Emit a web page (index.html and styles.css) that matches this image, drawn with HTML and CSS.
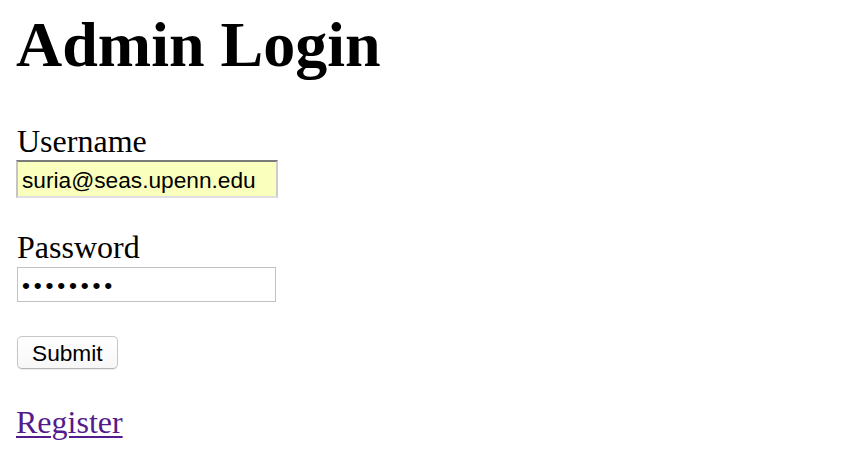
FILE: index.html
```html
<!DOCTYPE html>
<html lang="en">
<head>
<meta charset="utf-8">
<title>Admin Login</title>
<link rel="stylesheet" href="styles.css">
</head>
<body>
  <h1 class="title">Admin Login</h1>
  <form class="login-form">
    <div class="field field-user">
      <label class="field-label" for="username">Username</label>
      <input class="field-input input-autofill" id="username" type="text" value="suria@seas.upenn.edu">
    </div>
    <div class="field field-pass">
      <label class="field-label" for="password">Password</label>
      <input class="field-input input-plain" id="password" type="password" value="password">
    </div>
    <div class="actions">
      <button class="submit-btn" type="button">Submit</button>
    </div>
  </form>
  <a class="register-link" href="#register">Register</a>
</body>
</html>
```
FILE: styles.css
```css
html, body {
  background: #ffffff;
}

body {
  margin: 8px 16px 0;
  font-family: "Liberation Serif", "Times New Roman", serif;
  color: #000000;
}

.title {
  margin: 0;
  font-size: 64px;
  line-height: 74px;
  font-weight: bold;
}

.login-form {
  display: flex;
  flex-direction: column;
  align-items: flex-start;
  margin-top: 40px;
}

.field {
  display: flex;
  flex-direction: column;
  align-items: flex-start;
}

.field-pass {
  margin-top: 30px;
}

.field-label {
  font-size: 32px;
  line-height: 35px;
  padding-top: 2px;
  margin-left: 1px;
}

.field-input {
  box-sizing: border-box;
  font-family: "Liberation Sans", Arial, sans-serif;
  font-size: 22.7px;
  color: #000000;
  margin: 0;
  outline: none;
}

.input-autofill {
  width: 262px;
  height: 38px;
  margin-top: 1px;
  padding: 2px 0 0 4px;
  background: #fbffbd;
  border-style: solid;
  border-width: 2px;
  border-color: #7b7b7b #cdcdcd #e0e0e0 #c4c4c4;
}

.input-plain {
  width: 259px;
  height: 35px;
  margin-top: 2px;
  margin-left: 1px;
  padding: 2px 0 0 4px;
  background: #ffffff;
  border: 1px solid #c2c2c2;
  letter-spacing: 3.8px;
}

.actions {
  margin-top: 34px;
  margin-left: 1px;
}

.submit-btn {
  box-sizing: border-box;
  height: 33px;
  padding: 1px 14px 0;
  font-family: "Liberation Sans", Arial, sans-serif;
  font-size: 22.7px;
  color: #000000;
  background: linear-gradient(#ffffff, #f7f7f7);
  border: 1px solid #c6c6c6;
  border-bottom-color: #b4b4b4;
  border-radius: 5px;
  box-shadow: 0 1px 1px rgba(0, 0, 0, 0.08);
}

.register-link {
  display: inline-block;
  margin-top: 33px;
  padding-top: 3px;
  font-size: 32px;
  line-height: 35px;
  color: #551a8b;
  text-decoration: underline;
  text-decoration-thickness: 2px;
  text-underline-offset: 3px;
}
```
